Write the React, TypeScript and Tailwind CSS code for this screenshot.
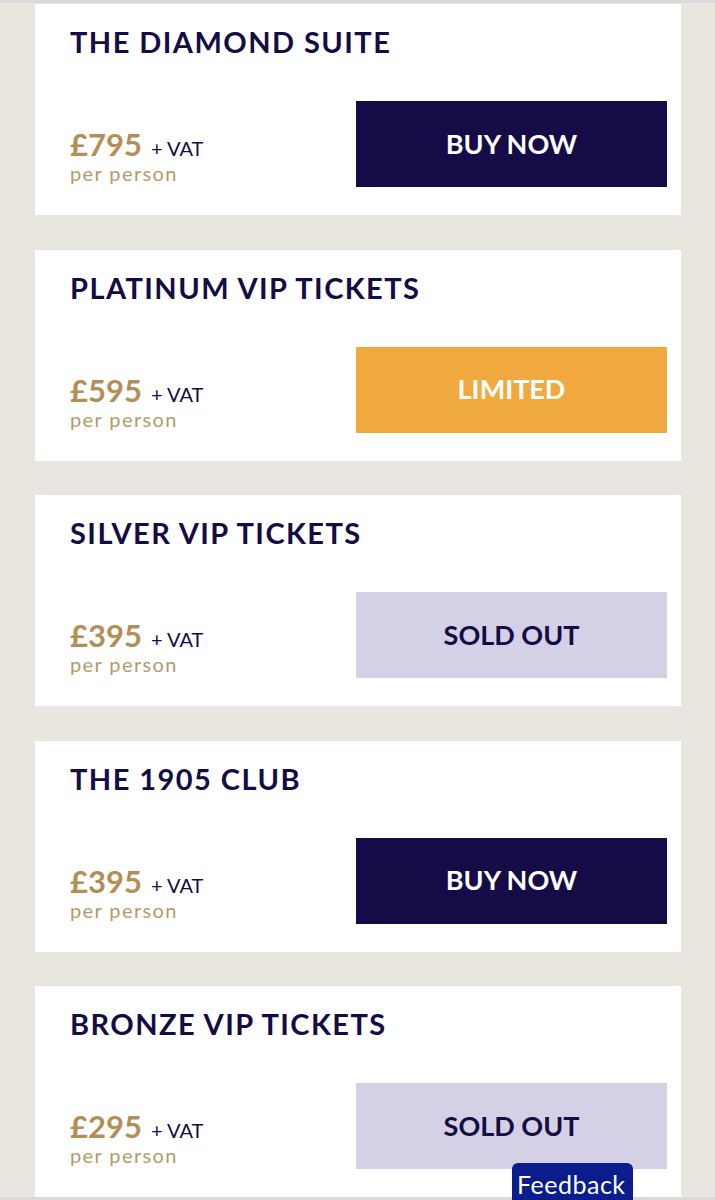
const tickets = [
  { name: 'THE DIAMOND SUITE', price: '£795', status: 'buy' },
  { name: 'PLATINUM VIP TICKETS', price: '£595', status: 'limited' },
  { name: 'SILVER VIP TICKETS', price: '£395', status: 'soldout' },
  { name: 'THE 1905 CLUB', price: '£395', status: 'buy' },
  { name: 'BRONZE VIP TICKETS', price: '£295', status: 'soldout' },
];

function StatusButton({ status }: { status: string }) {
  if (status === 'limited') {
    return (
      <button className="flex h-[86px] w-[311px] items-center justify-center bg-[#f0a93e] text-[27px] font-bold text-white">
        LIMITED
      </button>
    );
  }
  if (status === 'soldout') {
    return (
      <button className="flex h-[86px] w-[311px] items-center justify-center bg-[#d4d1e6] text-[27px] font-bold text-[#140c45]">
        SOLD OUT
      </button>
    );
  }
  return (
    <button className="flex h-[86px] w-[311px] items-center justify-center bg-[#140b47] text-[27px] font-bold text-white">
      BUY NOW
    </button>
  );
}

export default function App() {
  return (
    <div className="relative h-[1200px] overflow-hidden bg-[#e9e5df] font-['Lato',sans-serif]">
      <div className="h-[3px] bg-[#d9d9d9]" />
      <div className="flex flex-col gap-[34.5px] pt-[1px]">
        {tickets.map((t) => (
          <div
            key={t.name}
            className="mx-[35px] flex h-[211px] w-[646px] flex-col bg-white pb-[28px] pl-[35px] pr-[14px] pt-[20px]"
          >
            <h3 className="text-[29px] font-bold leading-[36px] tracking-[0.05em] text-[#140c45]">{t.name}</h3>
            <div className="flex flex-1 items-end justify-between">
              <div className="pb-[2px]">
                <div className="flex items-baseline gap-[9px]">
                  <span className="text-[31px] font-bold leading-[34px] text-[#b38f55]">{t.price}</span>
                  <span className="text-[20px] leading-[24px] text-[#140c45]">+ VAT</span>
                </div>
                <div className="text-[20px] leading-[24px] tracking-[0.07em] text-[#b59a6a]">per person</div>
              </div>
              <StatusButton status={t.status} />
            </div>
          </div>
        ))}
      </div>
      <div className="absolute bottom-0 left-0 right-0 h-[3px] bg-[#d9d9d9]" />
      <div className="absolute bottom-0 left-[512px] flex h-[37px] w-[121px] items-end rounded-t-[6px] bg-[#0b1d8c] pl-[5px] pb-[1px] text-[25px] leading-[30px] tracking-[0.02em] text-white">
        Feedback
      </div>
    </div>
  );
}
